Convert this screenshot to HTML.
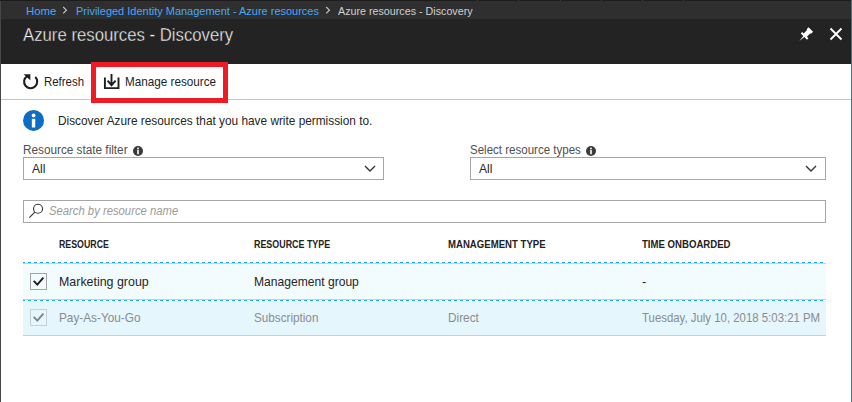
<!DOCTYPE html>
<html><head><meta charset="utf-8">
<style>
html,body{margin:0;padding:0;}
body{width:852px;height:402px;overflow:hidden;position:relative;background:#fff;font-family:"Liberation Sans",sans-serif;}
.a{position:absolute;white-space:nowrap;line-height:1;}
.s{display:inline-block;transform-origin:0 0;}
#topline{position:absolute;left:0;top:0;width:852px;height:1px;background:#1c1c1c;}
#crumb{position:absolute;left:0;top:1px;width:852px;height:18px;background:#2f2f2f;}
#hdr{position:absolute;left:0;top:19px;width:852px;height:45px;background:#232323;}
#lb{position:absolute;left:0;top:1px;width:1px;height:401px;background:#474747;}
#rb{position:absolute;left:851px;top:0;width:1px;height:402px;background:#1b7cd4;}
.link{color:#46a8fa;}
</style></head>
<body>
<div id="topline"></div>
<div id="crumb"></div>
<div style="position:absolute;left:477px;top:0;width:1px;height:1px;background:#3c3c3c;"></div><div style="position:absolute;left:518px;top:0;width:1px;height:1px;background:#3c3c3c;"></div><div style="position:absolute;left:560px;top:0;width:1px;height:1px;background:#3c3c3c;"></div><div style="position:absolute;left:601px;top:0;width:1px;height:1px;background:#3c3c3c;"></div><div style="position:absolute;left:642px;top:0;width:1px;height:1px;background:#3c3c3c;"></div><div style="position:absolute;left:683px;top:0;width:1px;height:1px;background:#3c3c3c;"></div>
<div id="hdr"></div>

<!-- breadcrumb -->
<div class="a link" style="left:26px;top:5.5px;font-size:11.5px;"><span class="s" style="transform:scaleX(0.99)">Home</span></div>
<svg class="a" style="left:61.8px;top:5.8px" width="6" height="9" viewBox="0 0 6 9"><path d="M1.2 1 L4.4 4.2 L1.2 7.4" fill="none" stroke="#c4c4c4" stroke-width="1.2"/></svg>
<div class="a link" style="left:76px;top:5.5px;font-size:11.5px;"><span class="s" style="transform:scaleX(0.955)">Privileged Identity Management - Azure resources</span></div>
<svg class="a" style="left:324.8px;top:5.8px" width="6" height="9" viewBox="0 0 6 9"><path d="M1.2 1 L4.4 4.2 L1.2 7.4" fill="none" stroke="#c4c4c4" stroke-width="1.2"/></svg>
<div class="a" style="left:338px;top:5.5px;font-size:11.5px;color:#cfcfcf;"><span class="s" style="transform:scaleX(0.932)">Azure resources - Discovery</span></div>

<!-- title -->
<div class="a" style="left:23px;top:26px;font-size:18px;color:#f4f4f4;-webkit-text-stroke:0.35px #232323;"><span class="s" style="transform:scaleX(0.93)">Azure resources - Discovery</span></div>

<!-- pin -->
<svg class="a" style="left:796px;top:24px" width="20" height="20" viewBox="0 0 20 20">
<g transform="translate(8.5,11.9) rotate(45)"><path d="M-3.2 -8.9 L3.2 -8.9 L3.2 -6.6 L2.3 -5.6 L2.3 -1.1 L4.4 -1.1 L4.4 0.9 L0.75 0.9 L0 7.3 L-0.75 0.9 L-4.4 0.9 L-4.4 -1.1 L-2.3 -1.1 L-2.3 -5.6 L-3.2 -6.6 Z" fill="#fff"/></g>
</svg>
<!-- close -->
<svg class="a" style="left:829px;top:27px" width="14" height="14" viewBox="0 0 14 14"><path d="M1.5 1.5 L12.5 12.5 M12.5 1.5 L1.5 12.5" stroke="#fff" stroke-width="1.9"/></svg>


<!-- toolbar -->
<svg class="a" style="left:20px;top:71px" width="22" height="22" viewBox="0 0 22 22">
<path d="M15.28 6.02 A6.55 6.55 0 1 1 6.9 5.3" fill="none" stroke="#1e1e1e" stroke-width="2.1"/>
<path d="M3.6 3.2 L10.3 3.2 L10.3 9.2 Z" fill="#1e1e1e"/>
</svg>
<div class="a" style="left:44px;top:75px;font-size:13px;color:#1e1e1e;"><span class="s" style="transform:scaleX(0.88)">Refresh</span></div>
<svg class="a" style="left:100px;top:71px" width="22" height="22" viewBox="0 0 22 22">
<path d="M4.9 6.6 L4.9 17.1 L18.5 17.1 L18.5 6.6" fill="none" stroke="#1e1e1e" stroke-width="1.9"/>
<path d="M11.5 3 L11.5 14.2 M7.6 9.6 L11.5 14.2 L15.6 9.6" fill="none" stroke="#1e1e1e" stroke-width="1.9"/>
</svg>
<div class="a" style="left:125px;top:75px;font-size:13px;color:#1e1e1e;"><span class="s" style="transform:scaleX(0.9)">Manage resource</span></div>
<div style="position:absolute;left:1px;top:99px;width:850px;height:1px;background:#c6c6c6;"></div>
<div style="position:absolute;left:91px;top:62px;width:127px;height:31px;border:5px solid #ec1b24;"></div>

<!-- info -->
<svg class="a" style="left:22px;top:109px" width="23" height="23" viewBox="0 0 23 23">
<circle cx="11.55" cy="11.4" r="10.5" fill="#0b6ec4"/>
<circle cx="11.6" cy="6.4" r="1.9" fill="#fff"/>
<rect x="9.85" y="9.8" width="3.4" height="8.7" fill="#fff"/>
</svg>
<div class="a" style="left:58px;top:114px;font-size:13px;color:#262626;"><span class="s" style="transform:scaleX(0.91)">Discover Azure resources that you have write permission to.</span></div>

<!-- filters -->
<div class="a" style="left:23px;top:144px;font-size:12px;color:#505050;"><span class="s" style="transform:scaleX(0.98)">Resource state filter</span></div>
<svg class="a" style="left:132px;top:145px" width="12" height="12" viewBox="0 0 12 12">
<circle cx="6" cy="6" r="5" fill="#3b3b3b"/><circle cx="6" cy="3.5" r="0.9" fill="#fff"/><rect x="5.2" y="5" width="1.6" height="4.2" fill="#fff"/>
</svg>
<div style="position:absolute;left:23px;top:157px;width:359px;height:21px;border:1px solid #a6a6a6;"></div>
<div class="a" style="left:32px;top:162px;font-size:13px;color:#262626;"><span class="s" style="transform:scaleX(0.93)">All</span></div>
<svg class="a" style="left:364px;top:165px" width="12" height="8" viewBox="0 0 12 8"><path d="M1 1 L6 6 L11 1" fill="none" stroke="#333" stroke-width="1.4"/></svg>

<div class="a" style="left:470px;top:144px;font-size:12px;color:#505050;"><span class="s" style="transform:scaleX(0.961)">Select resource types</span></div>
<svg class="a" style="left:585px;top:145px" width="12" height="12" viewBox="0 0 12 12">
<circle cx="6" cy="6" r="5" fill="#3b3b3b"/><circle cx="6" cy="3.5" r="0.9" fill="#fff"/><rect x="5.2" y="5" width="1.6" height="4.2" fill="#fff"/>
</svg>
<div style="position:absolute;left:470px;top:157px;width:354px;height:21px;border:1px solid #a6a6a6;"></div>
<div class="a" style="left:479px;top:162px;font-size:13px;color:#262626;"><span class="s" style="transform:scaleX(0.93)">All</span></div>
<svg class="a" style="left:805px;top:165px" width="12" height="8" viewBox="0 0 12 8"><path d="M1 1 L6 6 L11 1" fill="none" stroke="#333" stroke-width="1.4"/></svg>

<!-- search -->
<div style="position:absolute;left:23px;top:200px;width:801px;height:21px;border:1px solid #a6a6a6;"></div>
<svg class="a" style="left:24px;top:200px" width="24" height="22" viewBox="0 0 24 22">
<circle cx="14.05" cy="8.75" r="4.5" fill="none" stroke="#3a3a3a" stroke-width="1.15"/>
<path d="M10.9 12.1 L5.3 17.6" stroke="#3a3a3a" stroke-width="1.25"/>
</svg>
<div class="a" style="left:49px;top:205px;font-size:12px;font-style:italic;color:#9a9a9a;"><span class="s" style="transform:scaleX(0.94)">Search by resource name</span></div>

<!-- table header -->
<div class="a" style="left:59px;top:240px;font-size:10px;font-weight:bold;color:#222;"><span class="s" style="transform:scale(0.88,1)">RESOURCE</span></div>
<div class="a" style="left:254px;top:240px;font-size:10px;font-weight:bold;color:#222;"><span class="s" style="transform:scale(0.89,1)">RESOURCE TYPE</span></div>
<div class="a" style="left:448px;top:240px;font-size:10px;font-weight:bold;color:#222;"><span class="s" style="transform:scale(0.96,1)">MANAGEMENT TYPE</span></div>
<div class="a" style="left:642px;top:240px;font-size:10px;font-weight:bold;color:#222;"><span class="s" style="transform:scale(0.96,1)">TIME ONBOARDED</span></div>

<!-- rows -->
<div style="position:absolute;left:23px;top:262px;width:803px;height:1px;background:repeating-linear-gradient(90deg,#16ace6 0 2px,transparent 2px 5px,#16ace6 5px 6px);"></div>
<div style="position:absolute;left:23px;top:263px;width:803px;height:1px;background:#cfcfcf;"></div>
<div style="position:absolute;left:23px;top:264px;width:803px;height:35px;background:#f2fbfe;"></div>
<div style="position:absolute;left:23px;top:299px;width:803px;height:1px;background:#cfcfcf;"></div>
<div style="position:absolute;left:23px;top:300px;width:803px;height:1px;background:repeating-linear-gradient(90deg,#16ace6 0 2px,transparent 2px 5px,#16ace6 5px 6px);"></div>
<div style="position:absolute;left:23px;top:301px;width:803px;height:34px;background:#e5f6fd;"></div>
<div style="position:absolute;left:23px;top:335px;width:803px;height:1px;background:#cfcfcf;"></div>

<div style="position:absolute;left:30px;top:273px;width:15px;height:15px;border:1px solid #a4a4a4;"></div>
<svg class="a" style="left:30px;top:273px" width="17" height="17" viewBox="0 0 17 17"><path d="M3.7 7.9 L7.3 11.6 L13.4 4.6" fill="none" stroke="#1e1e1e" stroke-width="1.9"/></svg>
<div class="a" style="left:59px;top:275.3px;font-size:13px;color:#262626;"><span class="s" style="transform:scaleX(0.955)">Marketing group</span></div>
<div class="a" style="left:254px;top:275.3px;font-size:13px;color:#262626;"><span class="s" style="transform:scaleX(0.93)">Management group</span></div>
<div class="a" style="left:642px;top:275.3px;font-size:13px;color:#262626;">-</div>

<div style="position:absolute;left:30px;top:309px;width:15px;height:15px;border:1px solid #c9d0d3;"></div>
<svg class="a" style="left:30px;top:309px" width="17" height="17" viewBox="0 0 17 17"><path d="M3.7 7.9 L7.3 11.6 L13.4 4.6" fill="none" stroke="#7f8589" stroke-width="1.9"/></svg>
<div class="a" style="left:59px;top:311.3px;font-size:13px;color:#8c8c8c;"><span class="s" style="transform:scaleX(0.907)">Pay-As-You-Go</span></div>
<div class="a" style="left:254px;top:311.3px;font-size:13px;color:#8c8c8c;"><span class="s" style="transform:scaleX(0.9)">Subscription</span></div>
<div class="a" style="left:448px;top:311.3px;font-size:13px;color:#8c8c8c;"><span class="s" style="transform:scaleX(0.91)">Direct</span></div>
<div class="a" style="left:642px;top:311.3px;font-size:13px;color:#8c8c8c;"><span class="s" style="transform:scaleX(0.877)">Tuesday, July 10, 2018 5:03:21 PM</span></div>

<div id="lb"></div>
<div id="rb"></div>
</body></html>
